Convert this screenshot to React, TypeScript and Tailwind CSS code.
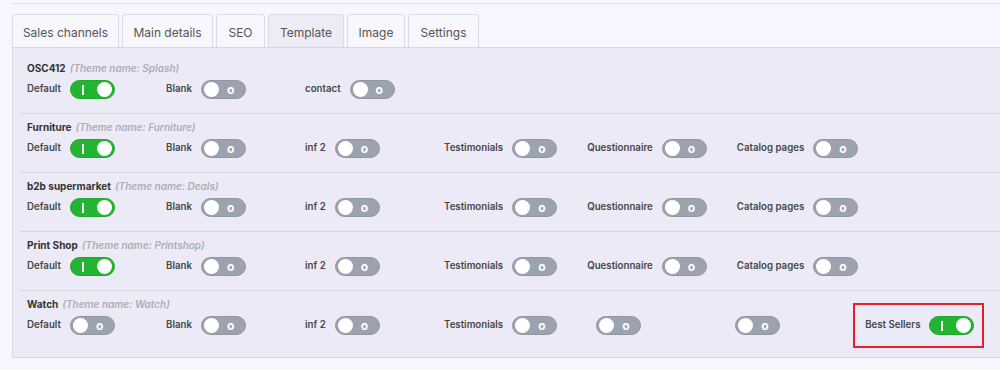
import React from "react";

type Item = { label: string; on?: boolean; marked?: boolean };
type Section = { name: string; theme: string; items: Item[] };

const tabs = [
  { name: "Sales channels", w: "w-[107px]" },
  { name: "Main details", w: "w-[91px]" },
  { name: "SEO", w: "w-[49px]" },
  { name: "Template", w: "w-[76px]", active: true },
  { name: "Image", w: "w-[58px]" },
  { name: "Settings", w: "w-[71px]" },
];

const full = (first: boolean): Item[] => [
  { label: "Default", on: first },
  { label: "Blank" },
  { label: "inf 2" },
  { label: "Testimonials" },
  { label: "Questionnaire" },
  { label: "Catalog pages" },
];

const sections: Section[] = [
  {
    name: "OSC412",
    theme: "Splash",
    items: [{ label: "Default", on: true }, { label: "Blank" }, { label: "contact" }],
  },
  { name: "Furniture", theme: "Furniture", items: full(true) },
  { name: "b2b supermarket", theme: "Deals", items: full(true) },
  { name: "Print Shop", theme: "Printshop", items: full(true) },
  {
    name: "Watch",
    theme: "Watch",
    items: [
      { label: "Default" },
      { label: "Blank" },
      { label: "inf 2" },
      { label: "Testimonials" },
      { label: "" },
      { label: "" },
      { label: "Best Sellers", on: true, marked: true },
    ],
  },
];

function Toggle({ on }: { on?: boolean }) {
  if (on) {
    return (
      <div className="relative w-[45px] h-[19px] rounded-full bg-[#22b531] border border-[#1fa62c]">
        <span className="absolute left-[11px] top-[4px] w-[2px] h-[10px] bg-white" />
        <span className="absolute right-[2px] top-[1px] w-[15px] h-[15px] rounded-full bg-white" />
      </div>
    );
  }
  return (
    <div className="relative w-[45px] h-[19px] rounded-full bg-[#9ca3ae] border border-[#8f97a3]">
      <span className="absolute left-[2px] top-[1px] w-[15px] h-[15px] rounded-full bg-white" />
      <span className="absolute left-[25px] top-[0px] text-[12px] leading-[17px] font-bold text-white">o</span>
    </div>
  );
}

function Switch({ item }: { item: Item }) {
  return (
    <div className="min-w-[139px] pr-[30px] flex items-center">
      <div className="relative flex items-center gap-[9px] h-[20px]">
        {item.label ? (
          <span className="text-[9.7px] font-semibold text-[#474747]">{item.label}</span>
        ) : (
          <span className="w-0" />
        )}
        <Toggle on={item.on} />
        {item.marked && (
          <div className="absolute -left-[12px] -right-[10px] -top-[12px] -bottom-[13px] border-2 border-[#e5202b]" />
        )}
      </div>
    </div>
  );
}

export default function App() {
  return (
    <div
      className="w-[1000px] h-[370px] overflow-hidden bg-[#f7f5fe] text-gray-800"
      style={{ fontFamily: "Inter, 'Noto Sans', sans-serif" }}
    >
      <div className="ml-[12px] pt-[3px]">
        <div className="border-t border-[#dfdde8] w-[1000px]" />
        <div className="flex gap-[3px] mt-[10px]">
          {tabs.map((t) => (
            <div
              key={t.name}
              className={`${t.w} h-[33px] pt-[3px] flex items-center justify-center rounded-t-[4px] border border-b-0 border-[#dcdae4] text-[12px] text-[#555] ${
                t.active ? "bg-[#ecebf6]" : "bg-[#f8f7fe]"
              }`}
            >
              {t.name}
            </div>
          ))}
        </div>

        <div className="w-[1000px] h-[311px] bg-[#eceaf7] border border-[#d9d7e2] pt-[7px]">
          {sections.map((s, i) => (
            <div
              key={s.name}
              className={`ml-[7px] pl-[7px] pt-[5px] pb-[14px] ${i < sections.length - 1 ? "border-b border-[#d8d6e1]" : ""}`}
            >
              <div className="h-[16px] flex items-center gap-[4px] text-[10px]">
                <span className="font-bold text-[#333]">{s.name}</span>
                <span className="italic font-semibold text-[#adadb5]">(Theme name: {s.theme})</span>
              </div>
              <div className="mt-[3px] flex items-center">
                {s.items.map((it, j) => (
                  <Switch key={j} item={it} />
                ))}
              </div>
            </div>
          ))}
        </div>
      </div>
    </div>
  );
}
